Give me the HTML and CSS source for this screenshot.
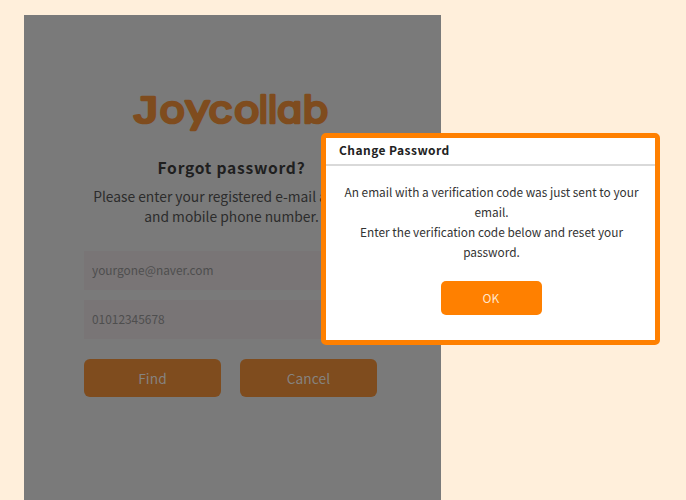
FILE: index.html
```html
<!DOCTYPE html>
<html lang="en">
<head>
  <meta charset="UTF-8">
  <meta name="viewport" content="width=device-width, initial-scale=1.0">
  <title>Forgot password</title>
  <link rel="stylesheet" href="styles.css">
</head>
<body>
  <div class="find-container">
    <svg class="logo" width="204" height="54" viewBox="128 86 204 54" role="img" aria-label="Joycollab">
      <text class="logo-j" transform="translate(130.6 123) scale(1.3 1)">J</text>
      <text transform="translate(159.6 123) scale(1.12 1)">o</text>
      <text class="logo-y" transform="translate(185.3 123) scale(1.13 1)">y</text>
      <text transform="translate(208.6 123) scale(1.12 1)">c</text>
      <text transform="translate(234 123) scale(1.12 1)">o</text>
      <text x="258.8 268" y="123">ll</text>
      <text transform="translate(277 123) scale(1.08 1)">a</text>
      <text transform="translate(302.8 123) scale(1.1 1)">b</text>
    </svg>
    <h2>Forgot password?</h2>
    <p class="guide">Please enter your registered e-mail address<br>and mobile phone number.</p>
    <form id="findForm">
      <input type="text" id="email" value="yourgone@naver.com">
      <input type="text" id="phone" value="01012345678">
      <div class="buttons">
        <button type="button">Find</button>
        <button type="button">Cancel</button>
      </div>
    </form>
  </div>

  <!-- Popup -->
  <div class="popup">
    <h3>Change Password</h3>
    <p>An email with a verification code was just sent to your email.<br>Enter the verification code below and reset your password.</p>
    <button type="button" class="ok-btn">OK</button>
  </div>
</body>
</html>
```
FILE: styles.css
```css
* {
  margin: 0;
  padding: 0;
  box-sizing: border-box;
}

body {
  font-family: "Noto Sans CJK KR", sans-serif;
  background-color: #ffefdb;
  height: 500px;
  padding: 15px 0 0 24px;
  overflow: hidden;
}

.find-container {
  width: 417px;
  height: 485px;
  padding: 71px 60px 0;
  background-color: #7a7a7a;
  text-align: center;
}

.logo {
  display: block;
  margin-left: 44px;
}

.logo text {
  font-family: Inter, sans-serif;
  font-size: 38px;
  font-feature-settings: "cv11";
  fill: #7f4c1e;
  stroke: #7f4c1e;
  stroke-width: 2.7;
  stroke-linejoin: round;
}

.logo .logo-j {
  font-family: "Liberation Mono", monospace;
}

.logo .logo-y {
  font-family: Lato, sans-serif;
  font-size: 42px;
}

h2 {
  margin-top: 14px;
  margin-right: 2px;
  font-size: 15.6px;
  line-height: 26px;
  font-weight: 700;
  letter-spacing: 0.75px;
  color: #1f1f1f;
}

.guide {
  width: 295px;
  margin-top: 6px;
  white-space: nowrap;
  font-size: 13.8px;
  line-height: 20px;
  color: #2c2c2c;
}

#findForm {
  margin-top: 25px;
}

input {
  display: block;
  width: 294px;
  height: 39px;
  margin-bottom: 10px;
  padding: 0 8px 2px;
  border: none;
  background-color: #797576;
  font-family: inherit;
  font-size: 11.9px;
  color: #4e4e4e;
}

.buttons {
  display: flex;
  gap: 19px;
  margin-top: 20px;
}

button {
  width: 137px;
  height: 38px;
  border: none;
  border-radius: 6px;
  background-color: #7f4c1e;
  font-family: inherit;
  font-size: 13.7px;
  letter-spacing: 0.1px;
  color: #868380;
}

.popup {
  position: absolute;
  left: 321px;
  top: 133px;
  width: 339px;
  height: 212px;
  border: 5px solid #ff8000;
  border-radius: 5px;
  background-color: white;
  text-align: center;
}

.popup h3 {
  height: 28px;
  padding-left: 13px;
  border-bottom: 2px solid #d9d9d9;
  font-size: 12px;
  line-height: 24px;
  letter-spacing: 0.45px;
  text-align: left;
  color: #222;
}

.popup p {
  padding: 16px 11px 0 13px;
  font-size: 11.85px;
  line-height: 20px;
  color: #333;
}

.ok-btn {
  width: 101px;
  height: 34px;
  margin-top: 19px;
  margin-left: 1px;
  padding-bottom: 2px;
  border-radius: 5px;
  background-color: #ff8000;
  font-size: 12px;
  color: #ffe6cc;
}
```
